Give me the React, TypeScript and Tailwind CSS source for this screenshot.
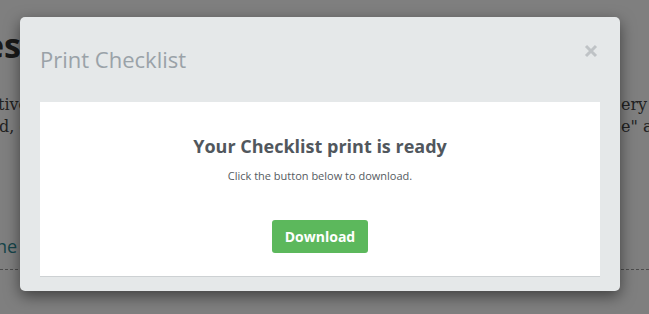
import React from "react";

export default function App() {
  return (
    <div className="relative w-[649px] h-[314px] overflow-hidden bg-white" style={{ fontFamily: '"Open Sans", sans-serif' }}>
      {/* background page */}
      <div className="flex flex-col">
        <div className="h-[28px]" />
        <div className="flex h-[34px] w-[21px] items-center justify-end whitespace-nowrap text-[34px] font-bold leading-none text-[#333]">
          Templates
        </div>
        <div className="h-[32px]" />
        <div className="flex flex-col text-[16px] leading-[22px] text-[#444] whitespace-nowrap" style={{ fontFamily: '"DejaVu Serif", serif' }}>
          <div className="flex">
            <div className="w-[621px] shrink-0 overflow-hidden"><span className="-ml-[2px]">tive checklists help your team keep track of every</span></div>
            <div className="shrink-0">ery check</div>
          </div>
          <div className="flex">
            <div className="w-[621px] shrink-0 overflow-hidden"><span className="-ml-[1px]">d, completed and archived lists</span></div>
            <div className="shrink-0">e" and</div>
          </div>
        </div>
        <div className="h-[96px]" />
        <div className="flex -ml-[4px] h-[24px] items-center whitespace-nowrap text-[18px] text-[#2e8b94]">ne more templates</div>
        <div className="h-[11px]" />
        <div className="border-t border-dashed border-[#999]" />
      </div>

      {/* overlay */}
      <div className="absolute inset-0 bg-black/50" />

      {/* modal */}
      <div className="absolute left-[20px] top-[17px] flex w-[600px] h-[274px] flex-col rounded-[5px] bg-[#e5e8e9] px-[20px] shadow-[0_5px_15px_rgba(0,0,0,0.5)]">
        <div className="flex h-[85px] items-start justify-between pt-[27px]">
          <div className="text-[22px] leading-[30px] text-[#9aa2a8]">Print Checklist</div>
          <svg width="14" height="14" viewBox="0 0 14 14" className="mr-[2px]">
            <path d="M2 2 L12 12 M12 2 L2 12" stroke="#bfc3c6" strokeWidth="3" strokeLinecap="butt" />
          </svg>
        </div>
        <div className="flex flex-col items-center border-b border-[#cdd1d3] bg-white pt-[32px] pb-[23px]">
          <div className="text-[18px] font-bold leading-[24px] text-[#51575d]">Your Checklist print is ready</div>
          <div className="mt-[10px] text-[11px] leading-[16px] text-[#555b61]">Click the button below to download.</div>
          <button className="mt-[36px] flex h-[33px] w-[96px] items-center justify-center rounded-[3px] bg-[#5cb85c] text-[14px] font-bold text-white">
            Download
          </button>
        </div>
      </div>
    </div>
  );
}
